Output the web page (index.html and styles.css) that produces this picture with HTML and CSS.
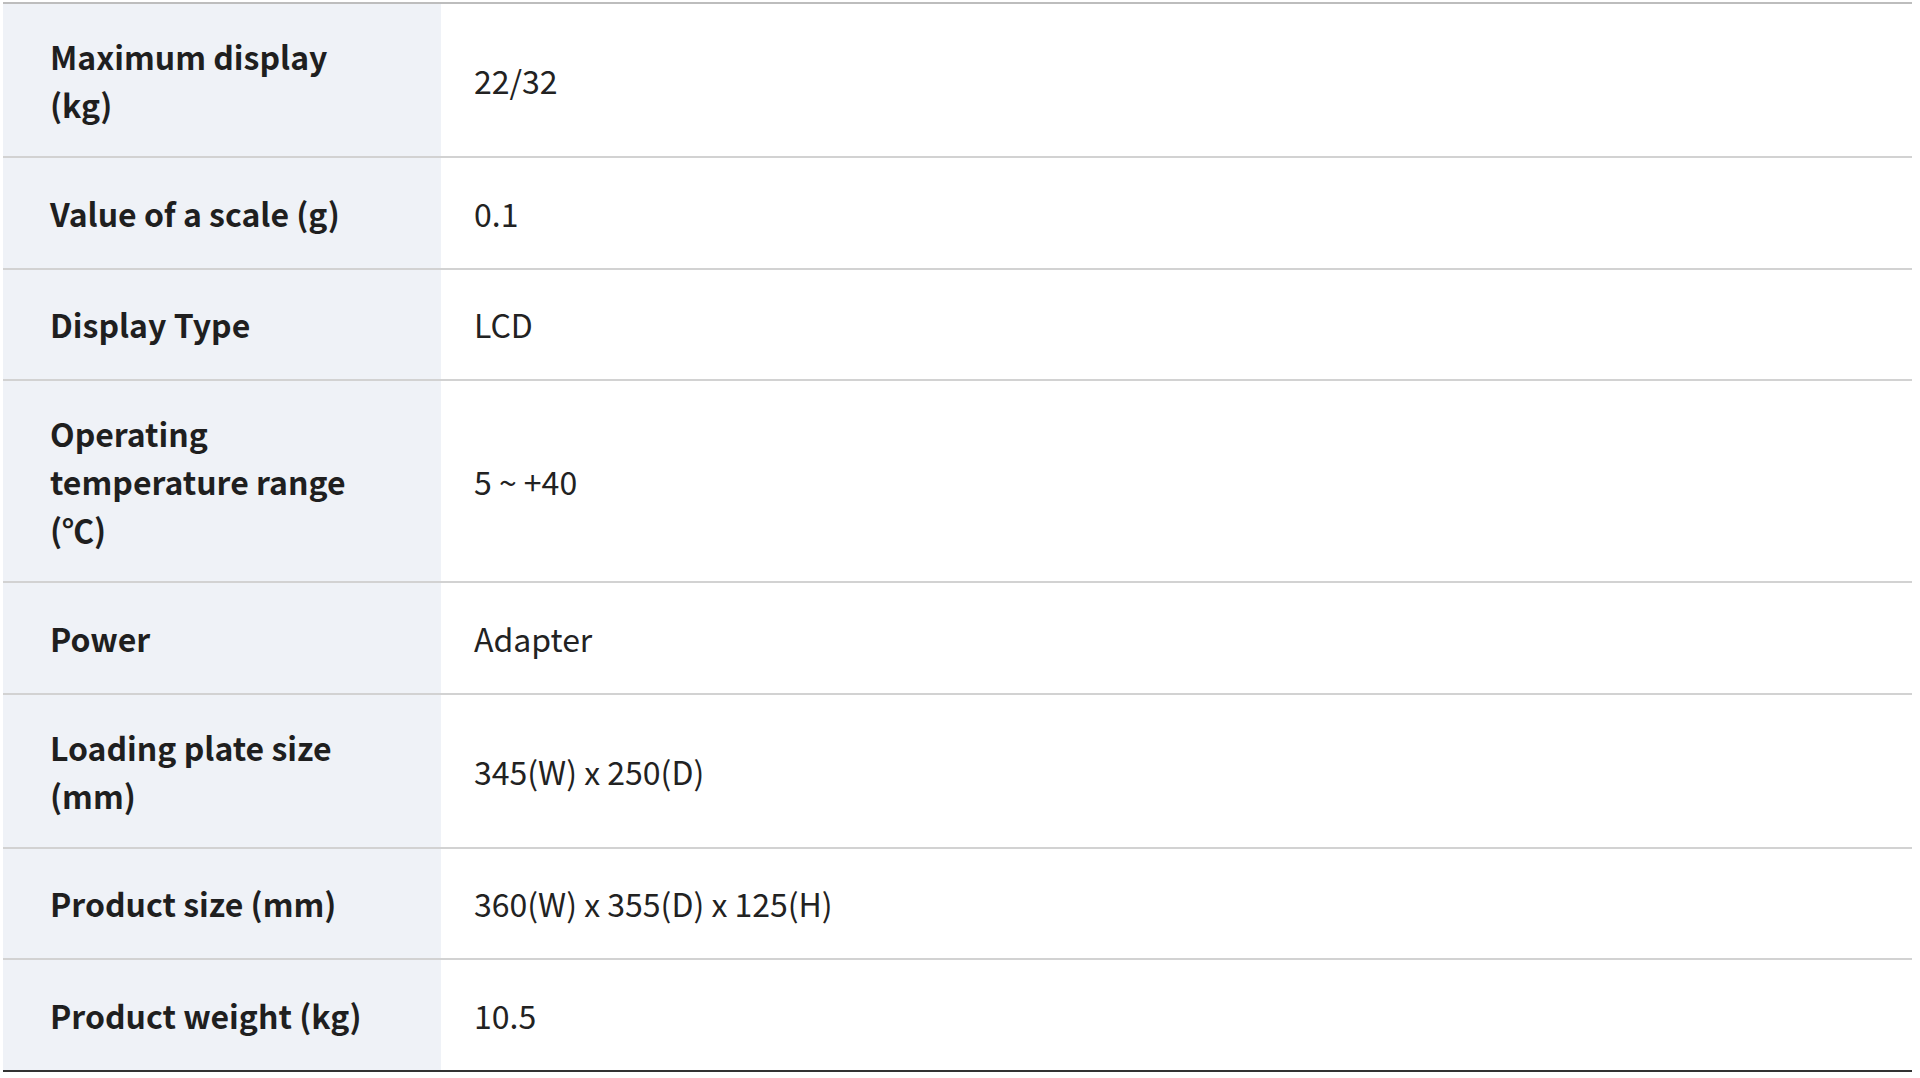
FILE: index.html
```
<!DOCTYPE html>
<html>
<head>
<meta charset="utf-8">
<link rel="stylesheet" href="styles.css">
</head>
<body>
<table class="spec">
  <tr><th>Maximum display (kg)</th><td>22/32</td></tr>
  <tr><th>Value of a scale (g)</th><td>0.1</td></tr>
  <tr><th>Display Type</th><td>LCD</td></tr>
  <tr><th>Operating temperature range (℃)</th><td>5 ~ +40</td></tr>
  <tr><th>Power</th><td>Adapter</td></tr>
  <tr><th>Loading plate size (mm)</th><td>345(W) x 250(D)</td></tr>
  <tr><th>Product size (mm)</th><td>360(W) x 355(D) x 125(H)</td></tr>
  <tr><th>Product weight (kg)</th><td>10.5</td></tr>
</table>
</body>
</html>
```
FILE: styles.css
```
html, body {
  margin: 0;
  padding: 0;
  background: #ffffff;
}
body {
  padding: 2px 8px 0 3px;
  font-family: "Noto Sans CJK KR", "Noto Sans", sans-serif;
}
.spec {
  width: 1909px;
  border-collapse: collapse;
  table-layout: fixed;
  border-top: 2px solid #bdbdbd;
  border-bottom: 2px solid #333333;
}
.spec tr {
  border-bottom: 2px solid #d2d2d2;
}
.spec tr:last-child {
  border-bottom: none;
}
.spec th, .spec td {
  height: 53.5px;
  padding: 28px 0 28px;
  font-size: 32px;
  line-height: 48px;
  text-align: left;
  vertical-align: middle;
  color: #1f1f1f;
}
.spec th {
  width: 322px;
  padding-left: 47px;
  padding-right: 69px;
  background: #eff2f7;
  font-weight: 700;
}
.spec td {
  padding-left: 33px;
  font-weight: 400;
  color: #222222;
}
```
